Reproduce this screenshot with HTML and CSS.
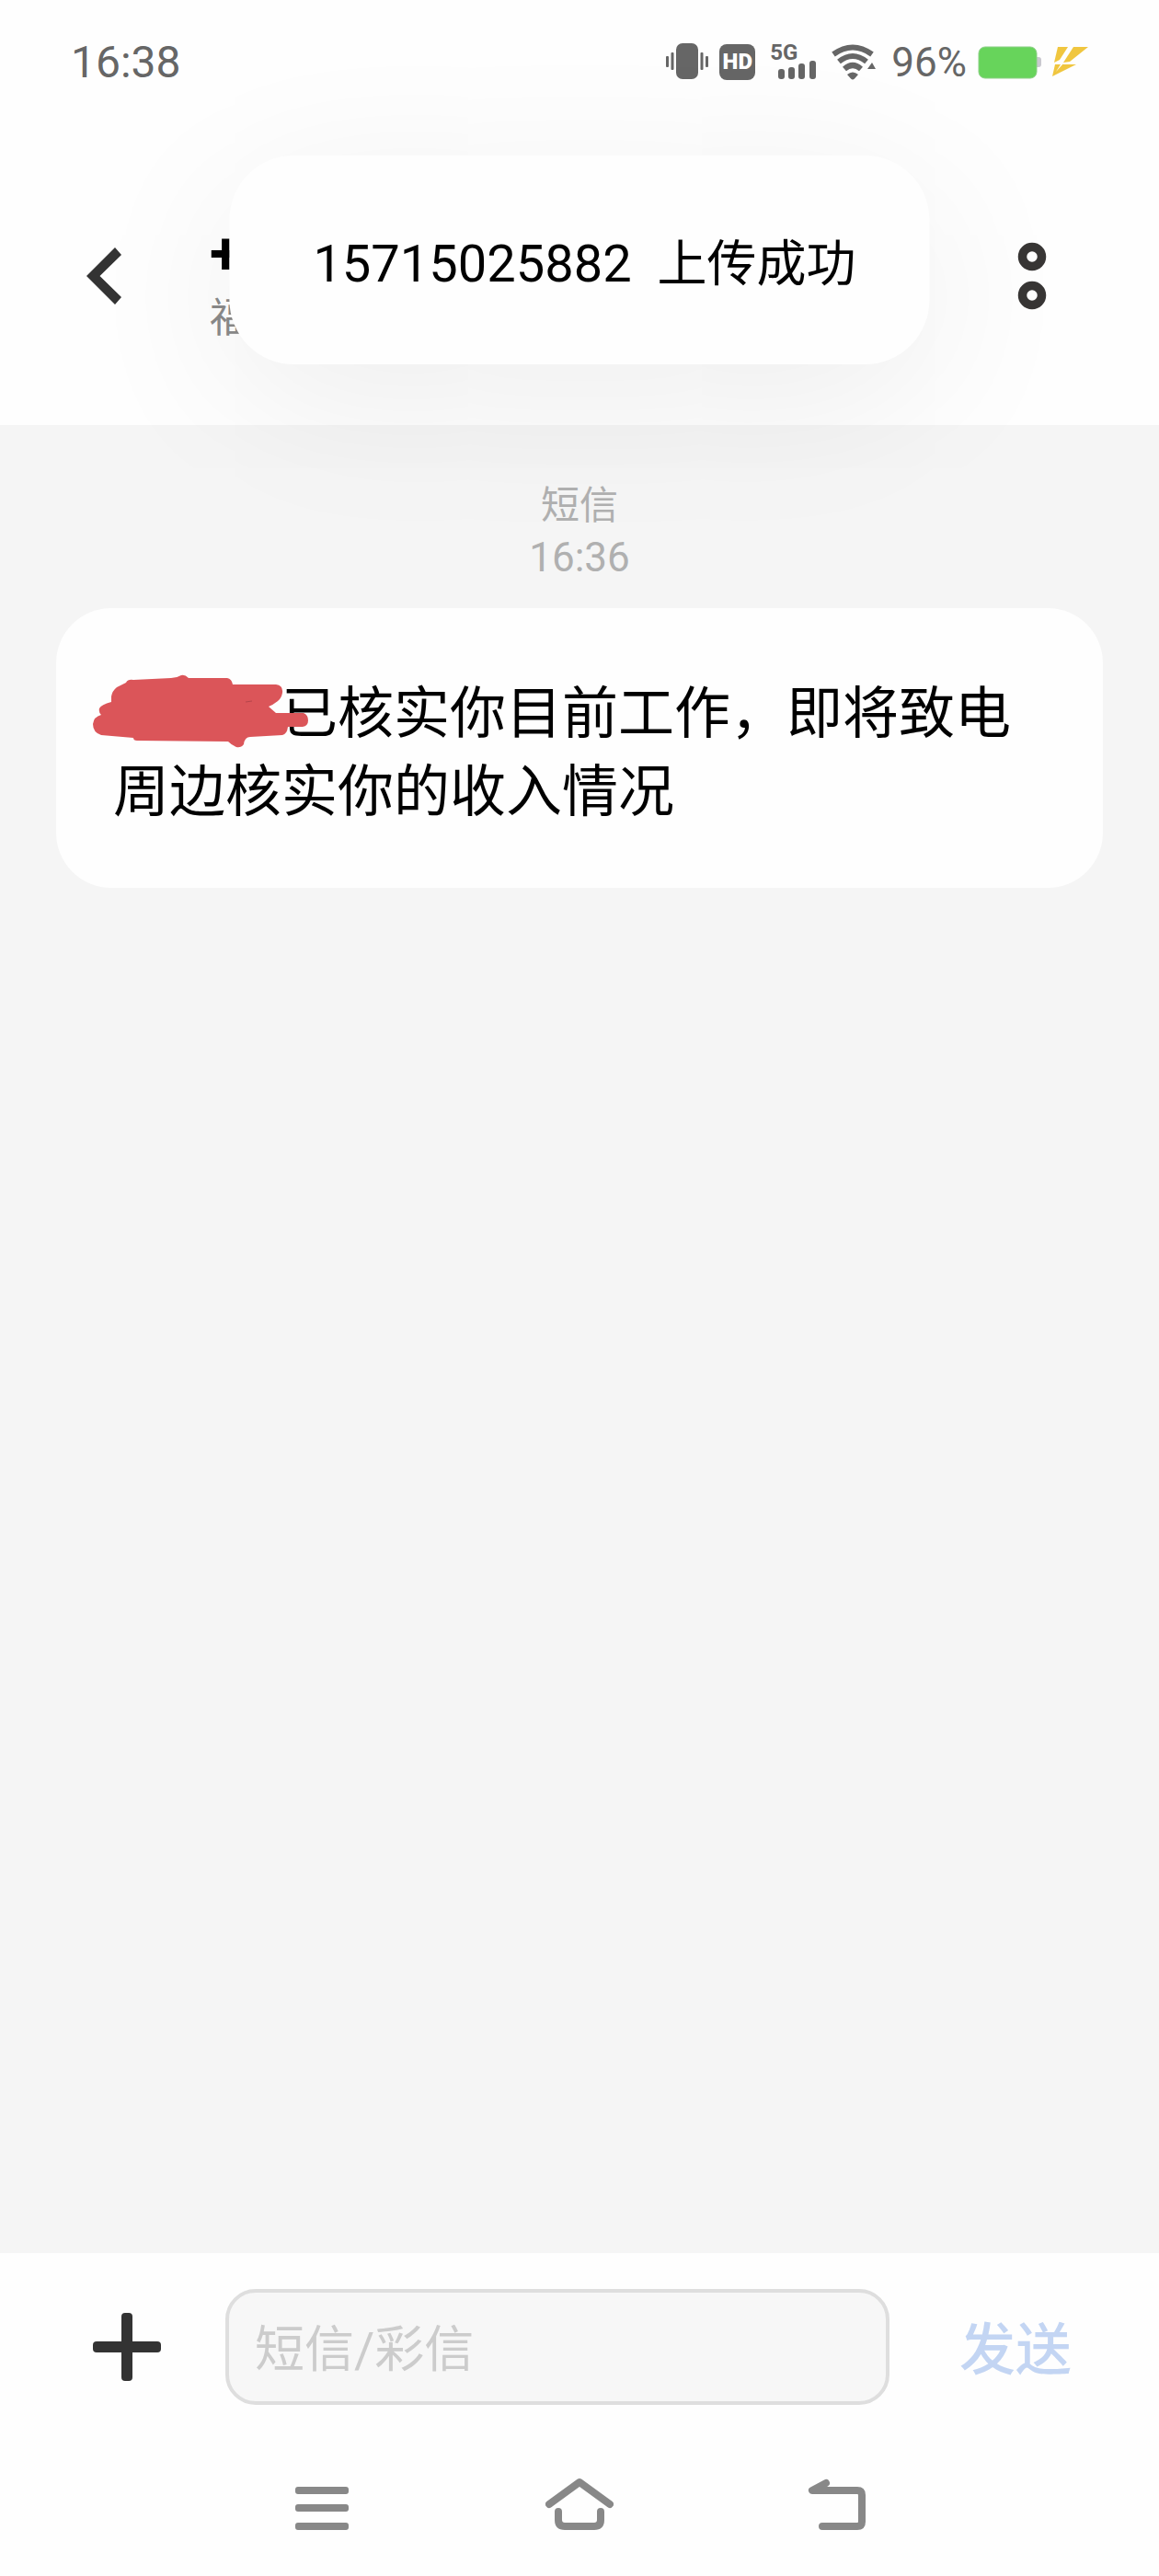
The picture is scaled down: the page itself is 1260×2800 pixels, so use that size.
FILE: index.html
```html
<!DOCTYPE html>
<html lang="zh-CN">
<head>
  <meta charset="UTF-8">
  <meta name="viewport" content="width=device-width, initial-scale=1.0">
  <title>短信</title>
  <link rel="stylesheet" href="styles.css">
</head>
<body>
  <div class="status-bar">
    <span class="clock">16:38</span>
    <div class="status-icons">
      <svg width="46" height="40" viewBox="0 0 46 40" fill="#666" aria-hidden="true">
        <rect x="11" y="0" width="24" height="39" rx="7"/>
        <rect x="0" y="14" width="3" height="12" rx="1"/>
        <rect x="5.5" y="10" width="3" height="19" rx="1"/>
        <rect x="37.5" y="10" width="3" height="19" rx="1"/>
        <rect x="43" y="14" width="3" height="12" rx="1"/>
      </svg>
      <span class="hd">HD</span>
      <div class="signal">
        <span class="network">5G</span>
        <svg width="42" height="20" viewBox="0 0 42 20" fill="#666" aria-hidden="true">
          <rect x="0" y="9" width="7" height="11" rx="3"/>
          <rect x="11" y="7" width="7" height="13" rx="3"/>
          <rect x="22" y="3" width="7" height="17" rx="3"/>
          <rect x="34" y="0" width="7" height="20" rx="3"/>
        </svg>
      </div>
      <svg width="53" height="40" viewBox="0 0 53 40" aria-hidden="true">
        <g fill="none" stroke="#666" stroke-width="6">
          <path d="M2 12Q23 -3 44 12"/>
          <path d="M8 20Q23 8 38 20"/>
          <path d="M14 28Q23 20 32 28"/>
        </g>
        <path d="M17 34Q23 29 29 34L25 38.500Q23 40.500 21 38.500ZM39 28L44 21L48 28Z" fill="#666"/>
      </svg>
      <span class="percent">96%</span>
      <svg width="69" height="40" viewBox="0 0 69 40" aria-hidden="true">
        <path d="M62 15H66Q69 15 69 18V23Q69 26 66 26H62Z" fill="#c9c8cf"/>
        <rect x="1" y="4" width="63" height="34" rx="7" fill="#67d45b" stroke="#8bcf85" stroke-width="1"/>
      </svg>
      <svg width="39" height="40" viewBox="0 0 39 40" fill="#f0c63f" aria-hidden="true">
        <path d="M6 4H17L8 18L2 21Z"/>
        <path d="M23 4H39L19 20L12 21Z"/>
        <path d="M3 23H9L4 31L13 21L11 23H26L0 36Z"/>
      </svg>
    </div>
  </div>

  <header class="header">
    <button class="icon-button" type="button" aria-label="返回">
      <svg width="38" height="62" viewBox="0 0 38 62">
        <path d="M0 31L31 0L38 8L14.500 31L38 54L31 62Z" fill="#333"/>
      </svg>
    </button>
    <div class="contact">
      <h1 class="contact-name">+</h1>
      <p class="contact-place">福</p>
    </div>
    <button class="icon-button" type="button" aria-label="更多">
      <svg width="32" height="74" viewBox="0 0 32 74" fill="none" stroke="#383635" stroke-width="9.500">
        <circle cx="16" cy="16" r="10.500"/>
        <circle cx="16" cy="58" r="10.500"/>
      </svg>
    </button>
  </header>

  <main class="chat">
    <div class="stamp">
      <span>短信</span>
      <time>16:36</time>
    </div>
    <p class="bubble"><span class="hidden-name"><svg class="scribble" width="240" height="82" viewBox="100 732 240 82" aria-hidden="true">
      <path d="M291 769L300 775L294 776Z" fill="#111"/>
      <path d="M122 757Q123 751 128 747L138 742Q140 738 146 739L187 737Q193 737 198 734Q202 733 206 737H248Q253 738 254 744H301Q309 745 308 753Q307 759 303 762Q298 766 293 768L301 775H331Q336 777 336 783Q336 789 330 790H314Q313 798 308 799L273 801Q267 801 266 809Q263 813 258 812Q253 810 249 806L150 805Q146 805 146 802L111 799Q102 796 102 787Q103 779 111 777Q108 774 109 770Q111 766 122 763Z" fill="#db5559"/>
      <path d="M268 763L275 762" stroke="#b5454a" stroke-width="1"/>
    </svg></span>已核实你目前工作，即将致电周边核实你的收入情况</p>
  </main>

  <form class="composer">
    <button class="icon-button" type="button" aria-label="添加">
      <svg width="74" height="74" viewBox="0 0 74 74" fill="#333">
        <rect x="0" y="31" width="74" height="12" rx="4"/>
        <rect x="31" y="0" width="12" height="74" rx="4"/>
      </svg>
    </button>
    <input class="message-input" type="text" placeholder="短信/彩信" aria-label="短信/彩信">
    <button class="send" type="button">发送</button>
  </form>

  <nav class="nav">
    <button class="icon-button" type="button" aria-label="最近任务">
      <svg width="74" height="60" viewBox="0 0 74 60" fill="#888">
        <rect x="8" y="13" width="58" height="8" rx="3"/>
        <rect x="8" y="32" width="58" height="8" rx="3"/>
        <rect x="8" y="52" width="58" height="8" rx="3"/>
      </svg>
    </button>
    <button class="icon-button" type="button" aria-label="主屏幕">
      <svg width="74" height="60" viewBox="0 0 74 60" fill="none" stroke="#888" stroke-width="8" stroke-linecap="round" stroke-linejoin="round">
        <path d="M4 32L37 8L70 32"/>
        <path d="M14 40V49Q14 56 21 56H53Q60 56 60 49V40"/>
      </svg>
    </button>
    <button class="icon-button" type="button" aria-label="返回上一级">
      <svg width="74" height="60" viewBox="0 0 74 60" fill="none" stroke="#888" stroke-width="8" stroke-linecap="round" stroke-linejoin="round">
        <path d="M25 9L10 17H59Q64 17 64 22V51Q64 56 59 56H21"/>
      </svg>
    </button>
  </nav>

  <div class="toast" role="status">
    <span class="toast-phone">15715025882</span>
    <span>上传成功</span>
  </div>
</body>
</html>
```
FILE: styles.css
```css
* {
  box-sizing: border-box;
}
body {
  position: relative;
  display: flex;
  flex-direction: column;
  min-height: 100vh;
  margin: 0;
  background-color: #fefefe;
  color: #000;
  font-family: Roboto, "Noto Sans CJK SC", sans-serif;
}
button {
  padding: 0;
  border: none;
  background: none;
  font-family: inherit;
  cursor: pointer;
}
svg {
  display: block;
}

/* status bar */
.status-bar {
  display: flex;
  align-items: center;
  justify-content: space-between;
  height: 134px;
  padding: 0 77px;
  color: #666;
}
.clock {
  font-size: 48px;
}
.status-icons {
  display: flex;
  align-items: center;
  gap: 12px;
}
.hd {
  width: 39px;
  border-radius: 8px;
  background-color: #666;
  color: #fefefe;
  font-size: 24px;
  font-weight: 900;
  line-height: 39px;
  text-align: center;
}
.signal {
  display: flex;
  flex-direction: column;
  width: 59px;
  padding: 0 4px;
}
.signal svg {
  align-self: flex-end;
}
.network {
  font-size: 24px;
  font-weight: 700;
  line-height: 18px;
}
.percent {
  font-size: 44px;
  line-height: 48px;
  padding-top: 2px;
}

/* header */
.header {
  display: flex;
  align-items: center;
  height: 328px;
  padding: 4px 122px 0 94px;
}
.contact {
  flex: 1;
  margin-left: 96px;
  padding-top: 20px;
}
.contact-name {
  margin: 0;
  font-size: 64px;
  font-weight: 700;
  line-height: 72px;
}
.contact-place {
  margin: 0;
  color: #8a8a8a;
  font-size: 44px;
  line-height: 66px;
}

/* messages */
.chat {
  flex: 1;
  padding: 60px 61px;
  background-color: #f5f5f5;
}
.stamp {
  display: flex;
  flex-direction: column;
  align-items: center;
  margin-bottom: 27px;
  color: #b0b0b0;
  font-size: 42px;
  line-height: 56px;
}
.stamp time {
  font-size: 44px;
}
.bubble {
  margin: 0;
  padding: 73px 62px 61px;
  border-radius: 60px;
  background-color: #fefefe;
  font-size: 61px;
  line-height: 85px;
}
.hidden-name {
  position: relative;
  display: inline-block;
  width: 3em;
  height: 1em;
}
.scribble {
  position: absolute;
  top: -4px;
  left: -24px;
}

/* composer */
.composer {
  display: flex;
  align-items: center;
  padding: 39px 95px 36px 101px;
}
.message-input {
  flex: 1;
  min-width: 0;
  height: 126px;
  margin: 0 76px 0 70px;
  padding: 6px 28px 0;
  border: 4px solid #dedede;
  border-radius: 33px;
  background-color: #f7f7f7;
  font-family: inherit;
  font-size: 54px;
}
.message-input::placeholder {
  color: #ccc;
}
.send {
  padding-top: 8px;
  color: #c3d5f3;
  font-size: 61px;
  font-weight: 500;
  line-height: 84px;
}

/* bottom navigation */
.nav {
  display: flex;
  justify-content: center;
  gap: 206px;
  padding: 40px 0 50px;
}

/* toast */
.toast {
  position: absolute;
  top: 169px;
  left: 50%;
  display: flex;
  align-items: center;
  gap: 28px;
  padding: 78px 80px 68px 91px;
  border-radius: 70px;
  background-color: #fefefe;
  box-shadow: 0 40px 180px rgba(0, 0, 0, 0.07);
  font-size: 54px;
  line-height: 81px;
  white-space: nowrap;
  transform: translateX(-50%);
}
.toast-phone {
  font-size: 56px;
}
```
